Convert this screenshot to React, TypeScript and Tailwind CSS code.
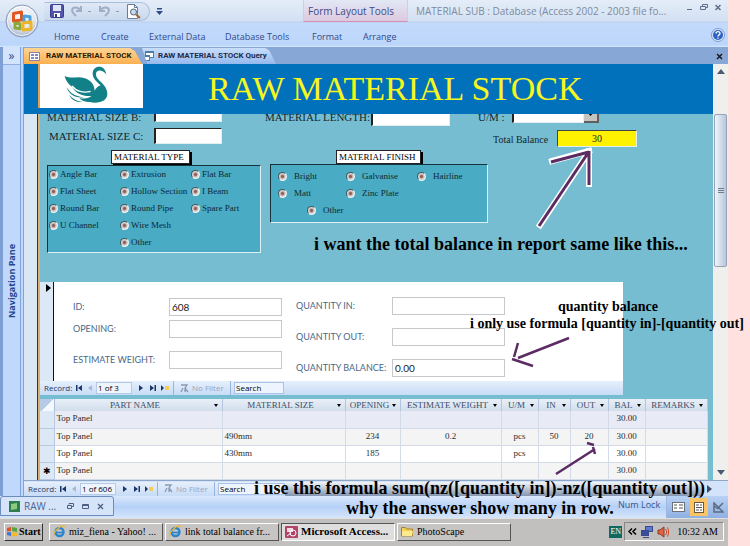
import React from "react";

const serif = "font-['Liberation_Serif',serif]";
const ui = "font-['Open_Sans','Noto_Sans',sans-serif]";

function OfficeButton() {
  return (
    <button aria-label="Office Button" className="row-span-2 flex justify-center self-start pt-1">
      <svg width="34" height="34" viewBox="0 0 34 34">
        <defs>
          <radialGradient id="orb" cx="50%" cy="35%" r="65%">
            <stop offset="0" stopColor="#ffffff" />
            <stop offset="0.6" stopColor="#e3e8f0" />
            <stop offset="1" stopColor="#9fb0c8" />
          </radialGradient>
        </defs>
        <circle cx="17" cy="17" r="16" fill="url(#orb)" stroke="#8a9cba" />
        <circle cx="17" cy="17" r="14.5" fill="none" stroke="#ffffff" strokeOpacity="0.8" />
        <g fill="none" strokeWidth="3" strokeLinejoin="round">
          <path d="M8.500 9.500l8-1.500v8l-8 1z" stroke="#e2561f" />
          <path d="M19 12l6 .8v6l-6-.8z" stroke="#4aa3dc" />
          <path d="M10 19l5 .8v5l-5-.8z" stroke="#8aa83c" />
          <path d="M18 19l8-1v7l-8 1z" stroke="#f0b428" />
        </g>
      </svg>
    </button>
  );
}

function QuickAccess() {
  return (
    <div className="flex h-[19px] w-[106px] items-center rounded-r-full border border-[#a9bfde] border-l-transparent bg-gradient-to-b from-[#dfe8f5] to-[#c9d9ee] pl-[5px]">
      <button aria-label="Save" className="mr-[6px]">
        <svg width="14" height="14" viewBox="0 0 14 14">
          <rect x="0.5" y="0.5" width="13" height="13" rx="1" fill="#5454ab" stroke="#3c3c8c" />
          <rect x="3" y="1" width="8" height="6" fill="#dfe6f8" />
          <rect x="4" y="9" width="6" height="4" fill="#fff" />
          <rect x="5" y="10" width="2" height="3" fill="#35357d" />
        </svg>
      </button>
      <button aria-label="Undo" className="flex items-center gap-[5px]">
        <svg width="13" height="12" viewBox="0 0 13 12" fill="none" stroke="#9faec6" strokeWidth="2">
          <path d="M2 1v5h5M2 6c2-4 8-5 9-1 0 3-2 4-4 6" transform="translate(13 0) scale(-1 1)" />
        </svg>
        <span className="h-px w-[3px] bg-[#8fa0bc]" />
      </button>
      <button aria-label="Redo" className="ml-[7px] flex items-center gap-[5px]">
        <svg width="13" height="12" viewBox="0 0 13 12" fill="none" stroke="#9faec6" strokeWidth="2">
          <path d="M2 1v5h5M2 6c2-4 8-5 9-1 0 3-2 4-4 6" />
        </svg>
        <span className="h-px w-[3px] bg-[#8fa0bc]" />
      </button>
      <button aria-label="Print Preview" className="ml-[7px]">
        <svg width="15" height="15" viewBox="0 0 15 15">
          <path d="M1.500.5h7l3 3v11h-10z" fill="#fff" stroke="#6b7c99" />
          <path d="M8.500.5v3h3" fill="none" stroke="#6b7c99" />
          <circle cx="7.500" cy="8" r="3" fill="#c6dcf3" stroke="#53637e" />
          <path d="M10 10.500l4 3.500" stroke="#a06a34" strokeWidth="2" />
        </svg>
      </button>
    </div>
  );
}

const ribbonTabs = [
  { name: "Home", width: "w-[47px]" },
  { name: "Create", width: "w-[48px]" },
  { name: "External Data", width: "w-[76px]" },
  { name: "Database Tools", width: "w-[87px]" },
  { name: "Format", width: "w-[51px]" },
  { name: "Arrange", width: "w-[51px]" },
];

function AppHeader() {
  return (
    <header className={`${ui} grid h-[47px] grid-cols-[44px_1fr] grid-rows-[22px_25px] bg-[linear-gradient(#e4edf8_0px,#d3e1f3_21px,#b9cfec_22px,#c3dafb_23px,#bcd6fb_45px,#d8e8fb_47px)]`}>
      <OfficeButton />
      <div className="flex">
        <div className="flex w-[259px] items-center gap-[6px]">
          <QuickAccess />
          <button aria-label="Customize Quick Access Toolbar">
            <svg width="7" height="7" viewBox="0 0 7 7" fill="#2f4a86">
              <path d="M1 0h5v1.500h-5zM0 3h7l-3.500 4z" />
            </svg>
          </button>
        </div>
        <div className="w-[105px] border-x border-[#c9cfe4] border-b border-b-[#d58fb4] bg-gradient-to-b from-[#e2e8f5] to-[#dcc9e0] pl-1 text-[10px] leading-[23px] text-[#3c4c86]">
          Form Layout Tools
        </div>
        <h1 className="flex-1 truncate pl-2 text-[10px] leading-[23px] text-[#7d8aa0]">
          MATERIAL SUB : Database (Access 2002 - 2003 file fo...
        </h1>
        <div className="flex w-[42px] items-start gap-[6px] pt-1 text-[#5f6f8c]">
          <button aria-label="Minimize">
            <svg width="8" height="8" viewBox="0 0 8 8" stroke="currentColor"><path d="M1 5.500h5" /></svg>
          </button>
          <button aria-label="Restore">
            <svg width="8" height="8" viewBox="0 0 8 8" fill="none" stroke="currentColor"><path d="M2.500 2V.5h5v3H6M.5 2.500h5v3h-5z" /></svg>
          </button>
          <button aria-label="Close">
            <svg width="8" height="8" viewBox="0 0 8 8" stroke="currentColor" strokeWidth="1.500"><path d="M1.500 1l5 5M6.500 1l-5 5" /></svg>
          </button>
        </div>
      </div>
      <nav className="flex items-center pl-[10px] text-[9px] text-[#33498a]">
        {ribbonTabs.map((t) => (
          <button key={t.name} className={`${t.width} pt-1 text-left whitespace-nowrap`}>
            {t.name}
          </button>
        ))}
        <button aria-label="Help" className="mr-[3px] ml-auto">
          <svg width="14" height="14" viewBox="0 0 14 14">
            <circle cx="7" cy="7" r="6.500" fill="#dce8fa" stroke="#7b9ad0" />
            <circle cx="7" cy="7" r="5" fill="#2d62c4" />
            <path d="M5 5.500c0-2.500 4-2.500 4 0 0 1.500-2 1.300-2 3M7 9.500v1.200" fill="none" stroke="#fff" strokeWidth="1.300" />
          </svg>
        </button>
      </nav>
    </header>
  );
}

function DocumentTabs() {
  return (
    <div className="flex h-[17px] items-end bg-[#87a7d6] font-['Roboto','Open_Sans',sans-serif] text-[8px] leading-4 font-bold">
      <button className="flex h-4 w-[118px] items-center gap-[6px] bg-gradient-to-b from-[#fdd493] to-[#fbb04f] pl-[5px] whitespace-nowrap text-[#2c1c05] [clip-path:polygon(0_0,90%_0,94%_20%,100%_100%,0_100%)]">
        <svg width="11" height="9" viewBox="0 0 11 9">
          <rect x="0.5" y="0.5" width="10" height="8" fill="#fff" stroke="#8d7fa6" />
          <path d="M2 3h3M2 6h3M6 3h3M6 6h3" stroke="#5a66a8" strokeWidth="1.500" />
        </svg>
        RAW MATERIAL STOCK
      </button>
      <button className="flex h-4 w-[134px] items-center gap-1 bg-gradient-to-b from-[#c9defa] to-[#94b9ee] whitespace-nowrap text-[#1d2c4c] [clip-path:polygon(0_0,92%_0,95%_15%,100%_100%,4%_100%)]">
        <svg width="12" height="11" viewBox="0 0 12 11" fill="#fff" stroke="#4d7fa6">
          <rect x="3.500" y="0.500" width="8" height="6" />
          <rect x="0.500" y="4.500" width="7" height="5" />
          <path d="M4 1.500h7M1 5.500h6" />
        </svg>
        RAW MATERIAL STOCK Query
      </button>
      <button aria-label="Close tab" className="mr-[5px] mb-1 ml-auto">
        <svg width="7" height="7" viewBox="0 0 7 7" stroke="#111" strokeWidth="1.300"><path d="M1 1l5 5M6 1l-5 5" /></svg>
      </button>
    </div>
  );
}

function NavigationPane() {
  return (
    <aside className={`${ui} flex w-6 shrink-0 bg-[#7d9fd3]`}>
      <div className="ml-[3px] flex flex-1 flex-col border-r-4 border-double border-[#7fa3dc] bg-[#c0d8fc]">
        <button className="h-[18px] border-b border-[#8fb0e0] bg-[#d3e3fb] text-[12px] leading-4 text-[#33498a]">»</button>
        <div className="flex flex-1 items-center justify-center">
          <span className="rotate-180 text-[9px] leading-4 font-bold text-[#23458c] [writing-mode:vertical-rl]">Navigation Pane</span>
        </div>
      </div>
    </aside>
  );
}

function Swan() {
  return (
    <svg width="44" height="38" viewBox="0 0 132 114" fill="#128087" role="img" aria-label="Swan logo">
      <path d="M127 26C122 18 118 15 111 14 101 12 95 17 96 27 97 44 128 52 130 82 131 100 116 110 92 110 72 110 54 106 46 96 62 100 76 96 82 90 58 92 34 82 24 62 12 54 4 42 2 30 22 40 40 30 60 36 80 42 92 56 92 74 96 66 102 60 110 58 98 46 85 38 86 20 88 4 102 0 112 3 122 7 125 15 127 26z" />
      <path d="M8 64C20 84 36 92 60 94 36 98 14 86 8 64zM16 86c10 12 20 18 40 22-20 1-34-6-40-22z" />
      <path d="M24 60C36 76 58 82 80 76" fill="none" stroke="#fff" strokeWidth="4" />
    </svg>
  );
}

const field = "border border-[#e4eef0] border-t-[#222] border-l-2 border-l-[#222] bg-white";

function Choice({ group, name, gap }: { group: string; name: string; gap: string }) {
  return (
    <label className={`flex items-center whitespace-nowrap ${gap}`}>
      <input
        type="radio"
        name={group}
        className="h-[9px] w-[9px] shrink-0 appearance-none rounded-full border border-[#f0f4f4] border-t-[#3d5a60] border-l-[#3d5a60] bg-[radial-gradient(#8c5f5c_1px,#c5b2ae_2px,#eff2f2_4px)]"
      />
      {name}
    </label>
  );
}

const legendStyle = "h-[14px] border border-[#222] bg-white pr-[5px] pl-[2px] text-[9px] leading-3 whitespace-nowrap text-black shadow-[2px_2px_0_#000]";
const frameStyle = "border border-[#def0f3] border-t-[#16333b] border-l-[#16333b] bg-[#4aabc5] text-[9px] text-[#0d2a33]";

function FormDetail() {
  return (
    <div className={`${serif} text-[#13262c]`}>
      <div className="flex h-3 items-end overflow-hidden text-[11px] leading-3">
        <label htmlFor="sizeB" className="mb-[3px] w-[114px] pl-[7px] whitespace-nowrap">MATERIAL SIZE B:</label>
        <input id="sizeB" className={`mb-1 h-4 w-[68px] ${field}`} />
        <label htmlFor="length" className="mb-[3px] ml-[43px] w-[106px] whitespace-nowrap">MATERIAL LENGTH:</label>
        <input id="length" className={`h-4 w-[79px] ${field}`} />
        <label htmlFor="um" className="mb-[3px] ml-7 w-[34px]">U/M :</label>
        <div className="mb-[3px] flex h-4 w-[87px]">
          <select id="um" className={`w-[72px] appearance-none ${field}`} />
          <span className="flex flex-1 items-center justify-center border-r-2 border-b-2 border-[#5f5f5f] bg-[#c6c4c0]">
            <svg width="7" height="4" viewBox="0 0 7 4"><path d="M0 0h7l-3.500 4z" /></svg>
          </span>
        </div>
      </div>
      <div className="flex h-6 items-start pt-[2px] text-[10px]">
        <label htmlFor="sizeC" className="w-[114px] pl-[9px] text-[11px] leading-4 whitespace-nowrap">MATERIAL SIZE C:</label>
        <input id="sizeC" className={`h-4 w-[68px] ${field}`} />
        <label htmlFor="total" className="mt-1 ml-[271px] w-16 leading-4">Total Balance</label>
        <input id="total" defaultValue="30" className="mt-[2px] h-[17px] w-20 border border-[#e4eef0] border-t-[#444] border-l-[#444] bg-[#fff200] text-center" />
      </div>
      <div className="flex items-start">
        <fieldset className="ml-[7px] w-[214px] pt-px">
          <legend className={`ml-16 ${legendStyle}`}>MATERIAL TYPE</legend>
          <div className={`grid auto-rows-[17px] grid-cols-[71px_71px_1fr] pb-px pl-px ${frameStyle}`}>
            {["Angle Bar", "Extrusion", "Flat Bar", "Flat Sheet", "Hollow Section", "I Beam", "Round Bar", "Round Pipe", "Spare Part", "U Channel", "Wire Mesh"].map((n) => (
              <Choice key={n} group="type" name={n} gap="gap-[2px]" />
            ))}
            <span />
            <span />
            <Choice group="type" name="Other" gap="gap-[2px]" />
          </div>
        </fieldset>
        <fieldset className="ml-[9px] w-[218px]">
          <legend className={`ml-[66px] ${legendStyle}`}>MATERIAL FINISH</legend>
          <div className={`grid auto-rows-[17px] grid-cols-[68px_71px_1fr] py-[3px] pl-[7px] ${frameStyle}`}>
            {["Bright", "Galvanise", "Hairline", "Matt", "Zinc Plate"].map((n) => (
              <Choice key={n} group="finish" name={n} gap="gap-[7px]" />
            ))}
            <span />
            <div className="col-span-3 flex pl-[29px]">
              <Choice group="finish" name="Other" gap="gap-[7px]" />
            </div>
          </div>
        </fieldset>
      </div>
    </div>
  );
}

function RecordBar({ position, search }: { position: string; search: string }) {
  const sep = "h-full w-px bg-[#9ab5dc]";
  return (
    <div className={`${ui} flex h-[14px] shrink-0 items-center bg-gradient-to-b from-[#e6effb] to-[#c7dcf7] pl-1 text-[8px] leading-3 text-[#23385f]`}>
      <span className="w-8">Record:</span>
      <button aria-label="First record"><svg width="6" height="6" viewBox="0 0 6 6" fill="#1c3668"><path d="M0 0h1.500v6h-1.500zM6 0v6l-4-3z" /></svg></button>
      <button aria-label="Previous record" className="ml-[6px]"><svg width="5" height="6" viewBox="0 0 5 6" fill="#a9b8d0"><path d="M4 0v6l-4-3z" /></svg></button>
      <input aria-label="Current record" defaultValue={position} className="ml-[3px] h-3 w-9 border border-[#b5cae8] bg-[#eef4fd] px-px text-black" />
      <button aria-label="Next record" className="ml-[7px]"><svg width="5" height="6" viewBox="0 0 5 6" fill="#1c3668"><path d="M0 0l4 3-4 3z" /></svg></button>
      <button aria-label="Last record" className="ml-[6px]"><svg width="6" height="6" viewBox="0 0 6 6" fill="#1c3668"><path d="M0 0l4 3-4 3zM4.500 0h1.500v6h-1.500z" /></svg></button>
      <button aria-label="New record" className="ml-[5px]"><svg width="8" height="6" viewBox="0 0 8 6"><path d="M0 0l3 3-3 3z" fill="#1c3668" /><rect x="4" y="1" width="4" height="4" fill="#f2cd58" /></svg></button>
      <span className={`mr-[6px] ml-1 ${sep}`} />
      <button className="flex w-[50px] items-center gap-[3px] whitespace-nowrap text-[#9aa5b8]">
        <svg width="9" height="9" viewBox="0 0 9 9" fill="none" stroke="#8c99b0"><path d="M1 1h6l-2 3v4M3 4L1 8M5 4l3 4" strokeWidth="1.300" /></svg>
        No Filter
      </button>
      <span className={`mr-[3px] ${sep}`} />
      <input aria-label="Search records" defaultValue="Search" className={`h-3 border border-[#a9c3e8] bg-[#eef4fd] px-px text-black ${search}`} />
    </div>
  );
}

const box = "h-[18px] w-[113px] border border-[#c6c8cc] bg-white px-[2px] text-[10px] text-[#222]";

function Subform() {
  return (
    <section className="mt-[29px] w-[583px] font-['Lato',sans-serif]">
      <div className="flex h-[99px] text-[9px] text-[#4b6788]">
        <div className="w-[14px] border-r border-[#111] bg-[#dce8f6] pt-[2px] pl-[6px]">
          <svg width="5" height="8" viewBox="0 0 5 8"><path d="M0 0l5 4-5 4z" /></svg>
        </div>
        <div className="flex flex-1 bg-white">
          <div className="w-[242px] pt-4 pl-[19px]">
            <div className="flex items-center"><label htmlFor="id" className="w-24">ID:</label><input id="id" defaultValue="608" className={box} /></div>
            <div className="mt-1 flex items-center"><label htmlFor="opening" className="w-24">OPENING:</label><input id="opening" className={box} /></div>
            <div className="mt-[13px] flex items-center"><label htmlFor="weight" className="w-24">ESTIMATE WEIGHT:</label><input id="weight" className={box} /></div>
          </div>
          <div className="flex flex-col gap-[13px] pt-[15px]">
            <div className="flex items-center"><label htmlFor="qin" className="w-24">QUANTITY IN:</label><input id="qin" className={box} /></div>
            <div className="flex items-center"><label htmlFor="qout" className="w-24">QUANTITY OUT:</label><input id="qout" className={box} /></div>
            <div className="flex items-center"><label htmlFor="qbal" className="w-24 whitespace-nowrap">QUANTITY BALANCE:</label><input id="qbal" defaultValue="0.00" className={box} /></div>
          </div>
        </div>
      </div>
      <RecordBar position="1 of 3" search="w-[50px]" />
    </section>
  );
}

const columns = [
  { name: "PART NAME", width: "w-[168px]" },
  { name: "MATERIAL SIZE", width: "w-[123px]" },
  { name: "OPENING", width: "w-[55px]" },
  { name: "ESTIMATE WEIGHT", width: "w-[101px]" },
  { name: "U/M", width: "w-[37px]" },
  { name: "IN", width: "w-[32px]" },
  { name: "OUT", width: "w-[38px]" },
  { name: "BAL", width: "w-[37px]" },
  { name: "REMARKS", width: "w-[62px]" },
];

const rows = [
  { mark: "", bg: "bg-[#e8eaf5]", cells: ["Top Panel", "", "", "", "", "", "", "30.00", ""] },
  { mark: "", bg: "bg-[#f4f4f4]", cells: ["Top Panel", "490mm", "234", "0.2", "pcs", "50", "20", "30.00", ""] },
  { mark: "", bg: "bg-white", cells: ["Top Panel", "430mm", "185", "", "pcs", "", "", "30.00", ""] },
  { mark: "✱", bg: "bg-[#f4f4f4]", cells: ["Top Panel", "", "", "", "", "", "", "30.00", ""] },
];

function Datasheet() {
  return (
    <table className={`${serif} mt-1 w-[667px] table-fixed border-collapse text-[9px] leading-3 text-[#2c2c2c]`}>
      <thead>
        <tr className="h-3 bg-gradient-to-b from-[#e9eff7] to-[#d2deec] text-[#3d4d66]">
          <th aria-label="Select all" className="w-[14px] border-r border-[#a9bdd8] bg-[linear-gradient(135deg,#b7cbe6_50%,#f5f9fd_50%)] p-0" />
          {columns.map((c) => (
            <th key={c.name} className={`${c.width} border-r border-[#b3c5de] p-0 font-normal`}>
              <div className="flex items-center pr-1 pl-[2px] whitespace-nowrap">
                <span className="flex-1 text-center">{c.name}</span>
                <svg width="4" height="3" viewBox="0 0 4 3"><path d="M0 0h4l-2 3z" /></svg>
              </div>
            </th>
          ))}
        </tr>
      </thead>
      <tbody>
        {rows.map((r, i) => (
          <tr key={i} className={`h-[17px] align-top ${r.bg}`}>
            <td className="border-r border-b border-[#b9c9df] bg-[#dce8f6] px-0 pt-[2px] pb-0 text-center font-['DejaVu_Sans',sans-serif] text-black">{r.mark}</td>
            {r.cells.map((c, j) => (
              <td key={j} className={`border-r border-b border-[#d3dbe8] px-[2px] pt-px pb-0 ${j > 1 ? "text-center" : ""}`}>{c}</td>
            ))}
          </tr>
        ))}
      </tbody>
    </table>
  );
}

function ScrollColumn() {
  return (
    <div className="flex w-[15px] shrink-0 flex-col items-center bg-[#efefed] pt-[5px] pb-[5px]">
      <svg width="8" height="5" viewBox="0 0 8 5" fill="#4a5a70"><path d="M0 5l4-5 4 5z" /></svg>
      <div className="mt-10 flex h-[153px] w-[13px] flex-col items-center justify-center gap-px rounded-[2px] border border-[#95a3b8] bg-gradient-to-r from-[#f0f5fb] to-[#b9c7da]">
        <span className="h-px w-[6px] bg-[#6d7c92]" />
        <span className="h-px w-[6px] bg-[#6d7c92]" />
        <span className="h-px w-[6px] bg-[#6d7c92]" />
      </div>
      <svg className="mt-auto" width="8" height="5" viewBox="0 0 8 5" fill="#4a5a70"><path d="M0 0h8l-4 5z" /></svg>
    </div>
  );
}

function StatusBar() {
  return (
    <div className={`${ui} flex h-[22px] bg-gradient-to-b from-[#dbe8fb] via-[#b5d0f7] to-[#d5e5fb] text-[#4a6594]`}>
      <div className="mb-[2px] flex w-[114px] items-center rounded-t-[3px] border border-[#6c8cbc] bg-[#d5e4f8] pl-2">
        <svg width="11" height="11" viewBox="0 0 11 11"><rect width="11" height="11" fill="#2e7d4e" /><path d="M2 3l6-1v6l-6 1z" fill="#8ccb7d" /></svg>
        <span className="ml-1 w-[43px] text-[10px] whitespace-nowrap">RAW ...</span>
        <div className="flex gap-2">
          <button aria-label="Restore window"><svg width="7" height="7" viewBox="0 0 7 7" fill="none" stroke="#4d5f80"><path d="M2 1.500V.5h4.500v3H5M.5 2.500h4v3h-4z" /></svg></button>
          <button aria-label="Maximize window"><svg width="7" height="7" viewBox="0 0 7 7" fill="none" stroke="#4d5f80"><path d="M.5 1.500h6v4h-6zM.5 2.500h6" /></svg></button>
          <button aria-label="Close window"><svg width="7" height="7" viewBox="0 0 7 7" stroke="#4d5f80" strokeWidth="1.300"><path d="M1 1l5 5M6 1l-5 5" /></svg></button>
        </div>
      </div>
      <span className="ml-auto w-12 text-[9px] leading-[18px] whitespace-nowrap text-[#39558c]">Num Lock</span>
      <div className="flex items-center border-l border-[#9db9e2] bg-gradient-to-b from-[#b9d1f4] to-[#8fb0e2] pl-[5px]">
        <button aria-label="Form View" className="w-[18px]"><svg width="13" height="10" viewBox="0 0 13 10"><rect x="0.500" y="0.500" width="12" height="9" fill="#fff" stroke="#6b6f78" /><path d="M2 3h3M2 6h3M7 3h4M7 6h4" stroke="#555" /></svg></button>
        <button aria-label="Layout View" className="flex h-[18px] w-[18px] items-center justify-center bg-[#fbc565]"><svg width="10" height="11" viewBox="0 0 10 11"><rect x="0.500" y="0.500" width="9" height="10" fill="#fff" stroke="#6b5a3a" /><path d="M2 3h3M2 5.500h6M2 8h3M7 2v2M7 7v2" stroke="#555" /></svg></button>
        <button aria-label="Design View" className="flex w-5 justify-center"><svg width="11" height="11" viewBox="0 0 11 11" fill="none" stroke="#5e6b80" strokeWidth="1.500"><path d="M1 1v9h9zM4 7l6-6M1 4l3 2" /></svg></button>
      </div>
    </div>
  );
}

function ExplorerIcon() {
  return (
    <svg width="13" height="13" viewBox="0 0 13 13" fill="none" className="shrink-0">
      <circle cx="6.500" cy="7" r="4" stroke="#2a83cf" strokeWidth="2.400" />
      <path d="M3 7.500h7" stroke="#2a83cf" strokeWidth="1.600" />
      <path d="M1 11.500C-1 8 8-1 12 1.500" stroke="#f0b52e" strokeWidth="1.200" />
    </svg>
  );
}

function TaskButton({ icon, label, active = false }: { icon: React.ReactNode; label: string; active?: boolean }) {
  const look = active
    ? "bg-[#dedede] text-[11px] font-bold border-t-[#555] border-l-[#555] border-r-white border-b-white"
    : "bg-[#c6c5c3] border-t-white border-l-white border-r-[#555] border-b-[#555]";
  return (
    <button className={`flex h-[18px] w-[114px] items-center gap-[3px] border pl-[3px] text-left whitespace-nowrap ${look}`}>
      {icon}
      <span>{label}</span>
    </button>
  );
}

function Taskbar() {
  return (
    <footer className={`${serif} flex h-[28px] items-center gap-[2px] border-t border-[#e2e0dc] bg-[#c1c0be] pr-1 pb-[2px] pl-1 text-[10px] text-black`}>
      <button className="mr-1 flex h-[18px] w-[39px] items-center gap-px border border-t-white border-r-[#333] border-b-[#333] border-l-white pl-px font-bold">
        <svg width="12" height="11" viewBox="0 0 12 11">
          <path d="M1 2l4-1v4l-4 .5z" fill="#e3512a" /><path d="M6 1l5 1v4l-5-1z" fill="#58a63b" />
          <path d="M1 6.500l4-.5v4l-4-1z" fill="#3d74d6" /><path d="M6 6l5 .8v3.200l-5 .5z" fill="#f2bc29" />
        </svg>
        Start
      </button>
      <TaskButton icon={<ExplorerIcon />} label="miz_fiena - Yahoo! ..." />
      <TaskButton icon={<ExplorerIcon />} label="link total balance fr..." />
      <TaskButton
        active
        label="Microsoft Access..."
        icon={<svg width="13" height="12" viewBox="0 0 13 12" className="shrink-0"><rect width="13" height="12" rx="1" fill="#b14468" /><path d="M2 2h6v4H2z" fill="#f4d9e2" /><circle cx="8" cy="7" r="3" fill="none" stroke="#fff" /><path d="M2 10l4-3" stroke="#fff" /></svg>}
      />
      <TaskButton
        label="PhotoScape"
        icon={<svg width="13" height="11" viewBox="0 0 13 11" className="shrink-0"><path d="M.5 1.500h4l1 1.500h6v7h-11z" fill="#f5d254" stroke="#a8832a" /><path d="M1 5h11l-1 5H1z" fill="#fce98e" /></svg>}
      />
      <div className="ml-auto flex items-center gap-[2px]">
        <span className="flex h-3 items-center bg-[#11685f] px-px text-[8px] leading-3 text-white">EN</span>
        <div className="flex h-[19px] items-center gap-1 border border-t-[#888] border-r-white border-b-white border-l-[#888] px-[3px]">
          <button aria-label="Show hidden icons"><svg width="9" height="7" viewBox="0 0 9 7" fill="none" stroke="#000" strokeWidth="1.500"><path d="M4 .5l-3 3 3 3M8 .5l-3 3 3 3" /></svg></button>
          <svg width="12" height="12" viewBox="0 0 12 12" stroke="#3c4a8c"><rect x="4.500" y="0.500" width="7" height="5" fill="#5a78d0" /><rect x="0.500" y="4.500" width="7" height="5" fill="#36509c" /><path d="M2 11.500h6" /></svg>
          <svg width="12" height="12" viewBox="0 0 12 12"><path d="M1 4h2l4-3v10l-4-3H1z" fill="#e06342" stroke="#8c3a24" /><path d="M8.500 3c1.500 2 1.500 4 0 6M10.500 1.500c1.500 3 1.500 6 0 9" fill="none" stroke="#d0492c" /></svg>
          <time className="ml-[2px] px-[2px] whitespace-nowrap">10:32 AM</time>
        </div>
      </div>
    </footer>
  );
}

function Annotations() {
  return (
    <div className={`${serif} pointer-events-none absolute inset-0 font-bold whitespace-nowrap text-black`}>
      <svg className="absolute top-0 left-0" width="750" height="546" viewBox="0 0 750 546" fill="none">
        <g stroke="#fff" strokeWidth="6" strokeLinecap="square">
          <path d="M540 225L588 153M552 161L589 151M589 151V184" />
        </g>
        <g stroke="#5b2c62" strokeWidth="3">
          <path d="M539 226L588 153M551 162L589 152M589 151V185" />
          <path d="M569 338L518 358M518 343L514 357M512 359L533 366" strokeWidth="2.500" />
          <path d="M556 474L595 449M587 443L594 445M593 447L595 454" strokeWidth="2.500" />
        </g>
      </svg>
      <p className="absolute top-[234px] left-[314px] text-[18px] leading-5">i want the total balance in report same like this...</p>
      <p className="absolute top-[298px] left-[558px] text-[14px] leading-[17px]">quantity balance</p>
      <p className="absolute top-[315px] left-[470px] text-[14px] leading-[17px]">i only use formula [quantity in]-[quantity out]</p>
      <p className="absolute top-[478px] left-[254px] text-[18px] leading-5">i use this formula sum(nz([quantity in])-nz([quantity out]))</p>
      <p className="absolute top-[498px] left-[346px] text-[18px] leading-5">why the answer show many in row.</p>
    </div>
  );
}

export default function App() {
  return (
    <div className="relative flex min-h-screen overflow-hidden bg-[#ffe2df]">
      <div className="mr-[22px] flex min-w-0 flex-1 flex-col">
        <AppHeader />
        <div className="flex flex-1">
          <NavigationPane />
          <main className="flex min-w-0 flex-1 flex-col">
            <DocumentTabs />
            <div className="flex flex-1">
              <div className="flex min-w-0 flex-1 flex-col">
                <div className="flex h-[50px] items-start bg-[#0271bb]">
                  <div className="ml-[14px] flex h-11 w-[105px] items-start justify-center border-l-2 border-[#e0a050] bg-white pt-[2px] pr-3">
                    <Swan />
                  </div>
                  <h2 className={`${serif} ml-[65px] text-[34px] leading-[50px] whitespace-nowrap text-[#f7f71e]`}>RAW MATERIAL STOCK</h2>
                </div>
                <div className="flex flex-1">
                  <div className="w-[14px] border-r border-[#333] bg-[#d9e6f3]" />
                  <div className="flex-1 border-l-2 border-[#d8b074] bg-[#76bdd1]">
                    <FormDetail />
                    <Subform />
                    <Datasheet />
                  </div>
                </div>
              </div>
              <ScrollColumn />
            </div>
            <div className="flex h-4 items-center border-t border-[#8da6c8] bg-[#d3e3f9]">
              <RecordBar position="1 of 606" search="w-[67px]" />
              <div className="mr-1 h-[14px] flex-1 bg-gradient-to-b from-[#f3f6fa] to-[#8495b0]" />
              <svg className="mr-4" width="5" height="8" viewBox="0 0 5 8" fill="#3c4c66"><path d="M0 0l5 4-5 4z" /></svg>
            </div>
          </main>
        </div>
        <StatusBar />
        <Taskbar />
      </div>
      <Annotations />
    </div>
  );
}
